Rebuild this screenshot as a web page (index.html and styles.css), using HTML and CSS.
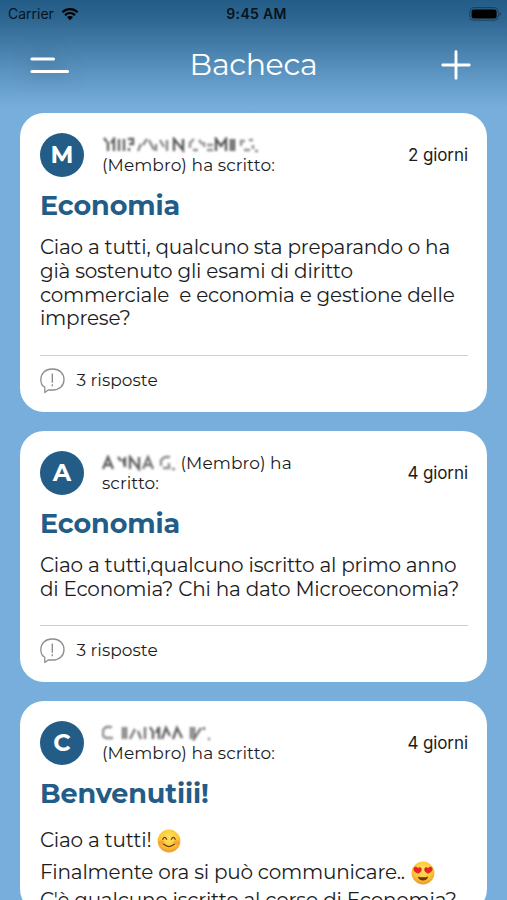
FILE: index.html
```html
<!DOCTYPE html>
<html lang="it">
<head>
    <meta charset="UTF-8">
    <meta name="viewport" content="width=device-width, initial-scale=1.0">
    <title>Bacheca</title>
    <link rel="stylesheet" href="styles.css">
</head>
<body>

<svg class="symbols" width="0" height="0">
    <symbol id="comment" viewBox="0 0 26 27">
        <path d="M4.800 20.300C2 18.600.8 16 .8 12.700.8 6.600 5.400 2 12 2h1c6.400 0 11 4.300 11 10.500S19.600 23 13 23H8.200L4.800 25.500Z" fill="none" stroke="#8d8d8d" stroke-width="1.300" stroke-linejoin="round"/>
        <path d="M12.300 6.500v9.300M12.300 17.300v2" fill="none" stroke="#8d8d8d" stroke-width="1.400"/>
    </symbol>
    <radialGradient id="face" cx=".5" cy=".35" r=".65">
        <stop offset="0" stop-color="#ffe261"/>
        <stop offset=".65" stop-color="#fdc535"/>
        <stop offset="1" stop-color="#f0952b"/>
    </radialGradient>
</svg>

<div class="status-bar">
    <div class="carrier">
        <span>Carrier</span>
        <svg width="18" height="14" viewBox="0 0 18 14">
            <g fill="none" stroke="#000" stroke-width="2.200">
                <path d="M1.400 5.200C5.700 1.100 12.300 1.100 16.600 5.200"/>
                <path d="M4 8.100c2.900-2.700 7.100-2.700 10 0"/>
            </g>
            <path d="M5.900 10.100c1.900-1.500 4.300-1.500 6.200 0L9 13.200z"/>
        </svg>
    </div>
    <div class="clock">9:45 AM</div>
    <svg class="battery" width="33" height="14" viewBox="0 0 33 14">
        <rect x=".8" y=".6" width="28.400" height="12.600" rx="3.800" fill="none" stroke="#1d3f59" stroke-width="1"/>
        <rect x="2.600" y="2.400" width="25" height="9" rx="2.200"/>
        <path d="M30.600 5v4q1.500-.5 1.500-2t-1.500-2" fill="#1d3f59"/>
    </svg>
</div>

<header class="header">
    <svg class="menu" width="40" height="18" viewBox="0 0 40 18">
        <path d="M2 3h21.500M2 15.500h35.500" stroke="#fff" stroke-width="3.200" stroke-linecap="round"/>
    </svg>
    <h1>Bacheca</h1>
    <svg width="30" height="30" viewBox="0 0 30 30">
        <path d="M15 1.800v26.400M1.800 15h26.400" stroke="#fff" stroke-width="2.900" stroke-linecap="round"/>
    </svg>
</header>

<main class="board">
    <article class="card">
        <div class="card-head">
            <div class="avatar">M</div>
            <div class="author">
                <svg class="masked" width="158" height="16" viewBox="0 0 158 16">
                    <g fill="none" stroke="#222" stroke-width="2.400">
                        <path d="M2 1l3 4M6 5v9M9 6l3-4v12M17 2v12M22 2v12M26 2h5v5h-4M27 11v3" opacity=".7"/>
                        <path d="M36 14l3-7M41 8l4-6M47 3l5 10M54 14v-7M58 3l4 7M65 3v11" opacity=".55"/>
                        <path d="M72 14V2l9 11V2" opacity=".75"/>
                        <path d="M88 11V6l4-4M97 3l3 4M91 13h5M102 5v5M105 8h6M105 13h6" opacity=".5"/>
                        <path d="M114 14V2l5 7 5-7v12M129 2v12M132 2v12" opacity=".75"/>
                        <path d="M139 9V4h4M147 3h4M151 8v4M142 13h6M153 14h3" opacity=".5"/>
                    </g>
                </svg>
                <br>(Membro) ha scritto:
            </div>
            <div class="time">2 giorni</div>
        </div>
        <h2>Economia</h2>
        <p class="text">
            <span>Ciao a tutti, qualcuno sta preparando o ha</span>
            <span>già sostenuto gli esami di diritto</span>
            <span>commerciale&nbsp; e economia e gestione delle</span>
            <span>imprese?</span>
        </p>
        <div class="card-foot">
            <svg width="26" height="27"><use href="#comment"/></svg>
            <span>3 risposte</span>
        </div>
    </article>

    <article class="card">
        <div class="card-head">
            <div class="avatar">A</div>
            <div class="author">
                <svg class="masked" width="74" height="16" viewBox="0 0 74 16">
                    <g fill="none" stroke="#222" stroke-width="2.400">
                        <path d="M1 14L6 2l5 12M3 10h7" opacity=".7"/>
                        <path d="M16 2l3 4M21 4l2 8V2M28 14V2l9 12V2" opacity=".7"/>
                        <path d="M41 14l5-12 5 12M43 10h7" opacity=".6"/>
                        <path d="M59 11V5l4-3h5M67 8v5h-6M70 14h3" opacity=".5"/>
                    </g>
                </svg>
                (Membro) ha<br>scritto:
            </div>
            <div class="time">4 giorni</div>
        </div>
        <h2>Economia</h2>
        <p class="text">
            <span>Ciao a tutti,qualcuno iscritto al primo anno</span>
            <span>di Economia? Chi ha dato Microeconomia?</span>
        </p>
        <div class="card-foot">
            <svg width="26" height="27"><use href="#comment"/></svg>
            <span>3 risposte</span>
        </div>
    </article>

    <article class="card">
        <div class="card-head">
            <div class="avatar">C</div>
            <div class="author">
                <svg class="masked" width="112" height="16" viewBox="0 0 112 16">
                    <g fill="none" stroke="#222" stroke-width="2.400">
                        <path d="M10 2H4L1 5v6l3 2h7" opacity=".5"/>
                        <path d="M21 2v12M24 2v12M28 14l5-10M36 6l3 8M43 2v12" opacity=".6"/>
                        <path d="M48 2l3 5v7M54 8l3-6v12M60 14l4-11 4 8M71 14l4-11 5 10" opacity=".7"/>
                        <path d="M89 2v12M92 2v12l7-11M102 2v3M106 14h2" opacity=".6"/>
                    </g>
                </svg>
                <br>(Membro) ha scritto:
            </div>
            <div class="time">4 giorni</div>
        </div>
        <h2>Benvenutiii!</h2>
        <p class="text with-emoji">
            <span class="tall">Ciao a tutti!
                <svg width="24" height="24" viewBox="0 0 24 24">
                    <circle cx="12" cy="12" r="11.400" fill="url(#face)"/>
                    <ellipse cx="4.600" cy="13.500" rx="2.800" ry="2.200" fill="#f5813a" opacity=".5"/>
                    <ellipse cx="19.400" cy="13.500" rx="2.800" ry="2.200" fill="#f5813a" opacity=".5"/>
                    <path d="M5.800 10.200q1.900-3.600 3.800 0M14.400 10.200q1.900-3.600 3.800 0M6.700 15.300q5.300 4.600 10.600 0" fill="none" stroke="#6b3d12" stroke-width="1.300" stroke-linecap="round"/>
                </svg>
            </span>
            <span class="tall">Finalmente ora si può communicare..
                <svg width="24" height="24" viewBox="0 0 24 24">
                    <circle cx="12" cy="12" r="11.400" fill="url(#face)"/>
                    <path d="M7 12.800C3.500 11 1.700 8.800 2.700 7c1-1.700 3.200-1.400 3.900.3C8 5.800 10.300 6 10.700 8c.4 1.900-1.400 3.700-3.700 4.800ZM17 12.800C20.500 11 22.300 8.800 21.300 7c-1-1.700-3.200-1.400-3.900.3C16 5.800 13.700 6 13.300 8c-.4 1.900 1.400 3.700 3.700 4.800Z" fill="#e5242c"/>
                    <path d="M6.800 15.400q5.200 1.700 10.400 0c-.6 5.400-9.800 5.400-10.400 0Z" fill="#713611"/>
                </svg>
            </span>
            <span>C'è qualcuno iscritto al corso di Economia?</span>
        </p>
    </article>
</main>

</body>
</html>
```
FILE: styles.css
```css
* {
    box-sizing: border-box;
}
body {
    margin: 0;
    height: 900px;
    overflow: hidden;
    font-family: Montserrat, Inter, "Liberation Sans", sans-serif;
    color: #1c1c1c;
    background: #77aedb linear-gradient(#235d87 0, #2c658f 18px, #5a92bf 70px, #77aedb 108px) no-repeat;
}
svg {
    display: block;
    flex: none;
}
.symbols {
    position: absolute;
}

/* status bar */
.status-bar {
    display: grid;
    grid-template-columns: 1fr auto 1fr;
    align-items: center;
    height: 27px;
    padding: 0 5px 0 8px;
    font-family: Inter, sans-serif;
    color: #06131d;
}
.carrier {
    display: flex;
    align-items: center;
    gap: 7px;
    font-size: 14px;
}
.clock {
    padding-left: 3px;
    font-size: 14px;
    font-weight: 600;
    letter-spacing: .3px;
}
.battery {
    justify-self: end;
}

/* header */
.header {
    display: flex;
    align-items: center;
    justify-content: space-between;
    height: 76px;
    padding: 0 36px 0 30px;
}
.header h1 {
    margin: -2px 4px 0 0;
    font-size: 30px;
    font-weight: 400;
    letter-spacing: -.3px;
    color: #fff;
}
.menu {
    filter: drop-shadow(0 0 9px rgba(30, 70, 105, .6));
}

/* cards */
.board {
    display: flex;
    flex-direction: column;
    gap: 19.4px;
    padding: 10.2px 19.6px 0 20.4px;
}
.card {
    padding: 20px 19.5px 0;
    border-radius: 24px;
    background: #fff;
}
.card-head {
    display: flex;
    align-items: center;
    height: 44px;
}
.avatar {
    display: flex;
    align-items: center;
    justify-content: center;
    width: 44px;
    height: 44px;
    margin-right: 18px;
    padding-bottom: 1px;
    border-radius: 50%;
    background: #235d87;
    color: #fff;
    font-size: 24px;
    font-weight: 700;
}
.author {
    flex: 1;
    font-size: 17px;
    line-height: 20.5px;
    letter-spacing: .08px;
    white-space: nowrap;
}
.masked {
    display: inline-block;
    vertical-align: -2px;
    filter: blur(.8px);
}
.time {
    font-family: Inter, sans-serif;
    font-size: 17px;
    letter-spacing: -.1px;
}
.card h2 {
    margin: 12px 0 0;
    font-size: 27px;
    line-height: 34px;
    font-weight: 700;
    letter-spacing: -.1px;
    color: #235d87;
}
.text {
    margin: 12.8px 0 0;
    font-size: 20px;
    line-height: 23.800px;
    letter-spacing: -.21px;
    white-space: nowrap;
}
.text > span {
    display: block;
}
.with-emoji {
    margin-top: 14px;
}
.text > .tall {
    display: flex;
    align-items: center;
    gap: 6px;
    height: 32px;
}
.card-foot {
    display: flex;
    align-items: center;
    gap: 10.5px;
    height: 56.5px;
    margin-top: 24px;
    padding-bottom: 7.5px;
    border-top: 1px solid #cfcfcf;
    font-size: 17px;
    letter-spacing: .05px;
}
```
